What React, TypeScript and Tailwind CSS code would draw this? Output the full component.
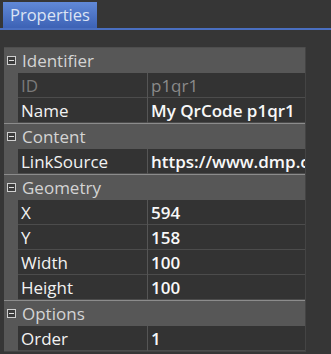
import React from "react";

const Minus = () => (
  <svg width="9" height="9" viewBox="0 0 9 9" className="shrink-0">
    <rect x="0.5" y="0.5" width="8" height="8" fill="#3c3c3c" stroke="#cfcfcf" strokeWidth="1" />
    <line x1="2" y1="4.5" x2="7" y2="4.5" stroke="#e0e0e0" strokeWidth="1" />
  </svg>
);

const Category = ({ label, first }: { label: string; first?: boolean }) => (
  <div
    className={
      "flex items-center h-[26px] bg-[#575757] pl-[3px] " +
      (first ? "border-t border-[#4e4e4e]" : "border-t border-[#8c8c8c]")
    }
  >
    <Minus />
    <span className="ml-[6px] text-[17px] font-medium text-[#d4d4d4] leading-none">{label}</span>
  </div>
);

const Prop = ({
  name,
  value,
  readOnly,
}: {
  name: string;
  value: string;
  readOnly?: boolean;
}) => (
  <div className="flex h-[25px] bg-[#575757]">
    <div className="w-[14px] shrink-0" />
    <div className="w-[129px] shrink-0 bg-[#333333] border-b border-[#4c4c4c] flex items-center pl-[3px]">
      <span className={"text-[17px] leading-none " + (readOnly ? "text-[#7a7a7a]" : "text-[#f2f2f2]")}>{name}</span>
    </div>
    <div className="w-[1px] shrink-0 bg-[#555555]" />
    <div className="flex-1 min-w-0 bg-[#333333] border-b border-[#4c4c4c] flex items-center pl-[3px] overflow-hidden">
      <span
        className={
          "text-[17px] leading-none whitespace-nowrap " +
          (readOnly ? "text-[#8a8a8a]" : "text-[#f8f8f8] font-semibold")
        }
      >
        {value}
      </span>
    </div>
  </div>
);

export default function App() {
  return (
    <div
      className="w-[331px] h-[354px] bg-[#363636] overflow-hidden"
      style={{ fontFamily: '"Open Sans", "Noto Sans", sans-serif' }}
    >
      <div className="h-[28px] pt-[2px] pl-[3px] flex">
        <div className="w-[94px] h-[26px] bg-gradient-to-b from-[#6189d8] to-[#3d62b5] flex items-center pl-[7px]">
          <span className="text-[16.5px] text-[#dce4f4] leading-none">Properties</span>
        </div>
      </div>
      <div className="h-[2px] bg-[#4a6fc0]" />
      <div className="mt-[17px] ml-[4px] w-[302px] border-r border-b border-[#444444]">
        <Category label="Identifier" first />
        <Prop name="ID" value="p1qr1" readOnly />
        <Prop name="Name" value="My QrCode p1qr1" />
        <Category label="Content" />
        <Prop name="LinkSource" value="https://www.dmp.com/qr" />
        <Category label="Geometry" />
        <Prop name="X" value="594" />
        <Prop name="Y" value="158" />
        <Prop name="Width" value="100" />
        <Prop name="Height" value="100" />
        <Category label="Options" />
        <Prop name="Order" value="1" />
      </div>
    </div>
  );
}
